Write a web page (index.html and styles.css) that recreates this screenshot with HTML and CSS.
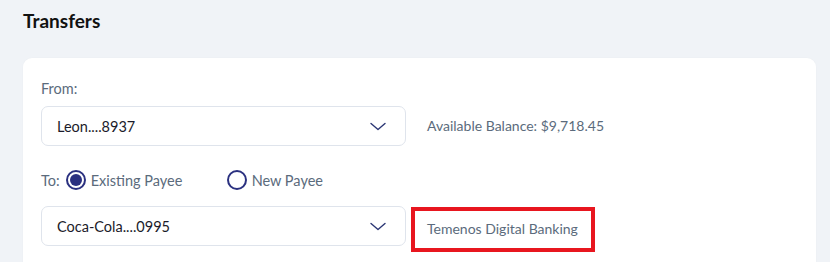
FILE: index.html
```html
<!DOCTYPE html>
<html>
<head>
<meta charset="utf-8">
<link rel="stylesheet" href="styles.css">
</head>
<body>
<div class="page">
  <h1 class="title">Transfers</h1>
  <div class="card">
    <div class="label">From:</div>
    <div class="row">
      <div class="select">
        <span class="select-text">Leon....8937</span>
        <svg class="chev" width="16" height="9" viewBox="0 0 16 9"><path d="M1 1.5 L8 7.5 L15 1.5" fill="none" stroke="#2b3674" stroke-width="1.4" stroke-linecap="round" stroke-linejoin="round"/></svg>
      </div>
      <div class="info">Available Balance: $9,718.45</div>
    </div>
    <div class="to-row">
      <span class="to-label">To:</span>
      <label class="radio checked"><span class="dot"></span>Existing Payee</label>
      <label class="radio"><span class="dot"></span>New Payee</label>
    </div>
    <div class="row">
      <div class="select">
        <span class="select-text">Coca-Cola....0995</span>
        <svg class="chev" width="16" height="9" viewBox="0 0 16 9"><path d="M1 1.5 L8 7.5 L15 1.5" fill="none" stroke="#2b3674" stroke-width="1.4" stroke-linecap="round" stroke-linejoin="round"/></svg>
      </div>
      <div class="info highlight">Temenos Digital Banking</div>
    </div>
  </div>
</div>
</body>
</html>
```

FILE: styles.css
```css
* { box-sizing: border-box; }
html, body { margin: 0; padding: 0; }
body {
  background: #f0f3f7;
  font-family: "Source Sans Pro", Lato, "Liberation Sans", sans-serif;
  overflow: hidden;
  height: 262px;
}
.page { padding: 10px 14px 0 23px; }
.title {
  margin: 0;
  font-size: 19px;
  font-weight: 700;
  color: #111;
  line-height: 22px;
  height: 48px;
}
.card {
  background: #fff;
  border-radius: 9px;
  width: 793px;
  padding: 22px 18px 40px 18px;
  box-shadow: 0 0 2px rgba(0,0,0,0.03);
}
.label {
  font-size: 14.5px;
  color: #5b6b7c;
  line-height: 18px;
  margin-bottom: 8px;
}
.row {
  display: flex;
  align-items: flex-start;
}
.select {
  width: 365px;
  height: 40px;
  border: 1px solid #dfe4ec;
  border-radius: 7px;
  display: flex;
  align-items: center;
  justify-content: space-between;
  padding: 0 19px 0 15px;
  flex: none;
}
.select-text {
  font-size: 14.5px;
  color: #1b1b2a;
}
.info {
  margin-left: 21px;
  font-size: 14px;
  color: #5b6b7c;
  line-height: 40px;
}
.highlight {
  margin-left: 5px;
  margin-top: 1px;
  border: 4px solid #e8161f;
  padding: 0 13px 0 12px;
  height: 45px;
  line-height: 36px;
}
.to-row {
  display: flex;
  align-items: center;
  height: 24px;
  margin: 22px 0 14px 0;
  font-size: 14.5px;
  color: #5b6b7c;
}
.to-label { margin-right: 6px; }
.radio {
  display: flex;
  align-items: center;
  width: 161px;
}
.radio + .radio { width: auto; }
.dot {
  width: 20px;
  height: 20px;
  border-radius: 50%;
  border: 2px solid #2b3180;
  margin-right: 5px;
  position: relative;
  flex: none;
}
.checked .dot::after {
  content: "";
  position: absolute;
  left: 2px; top: 2px;
  width: 12px; height: 12px;
  border-radius: 50%;
  background: #2b3180;
}
```
